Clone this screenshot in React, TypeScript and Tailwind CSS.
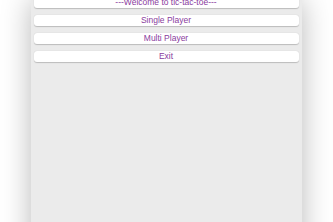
import React from 'react';

const items = ['---Welcome to tic-tac-toe---', 'Single Player', 'Multi Player', 'Exit'];

export default function App() {
  return (
    <div className="w-[333px] h-[222px] bg-white overflow-hidden flex justify-center items-start">
      <div className="ml-[-1px] w-[271px] h-[260px] shrink-0 bg-[#ebebeb] shadow-[0_0_28px_rgba(0,0,0,0.28)] px-[3px]">
        <div className="mt-[-3px] flex flex-col gap-[7px]">
          {items.map((label) => (
            <button
              key={label}
              className="h-[11px] w-full bg-white rounded-[3px] shadow-[0_0.5px_1px_rgba(0,0,0,0.2)] flex items-center justify-center text-[8.5px] leading-none text-[#8a3c9e]"
              style={{ fontFamily: '"Liberation Sans", Arial, sans-serif' }}
            >
              {label}
            </button>
          ))}
        </div>
      </div>
    </div>
  );
}
